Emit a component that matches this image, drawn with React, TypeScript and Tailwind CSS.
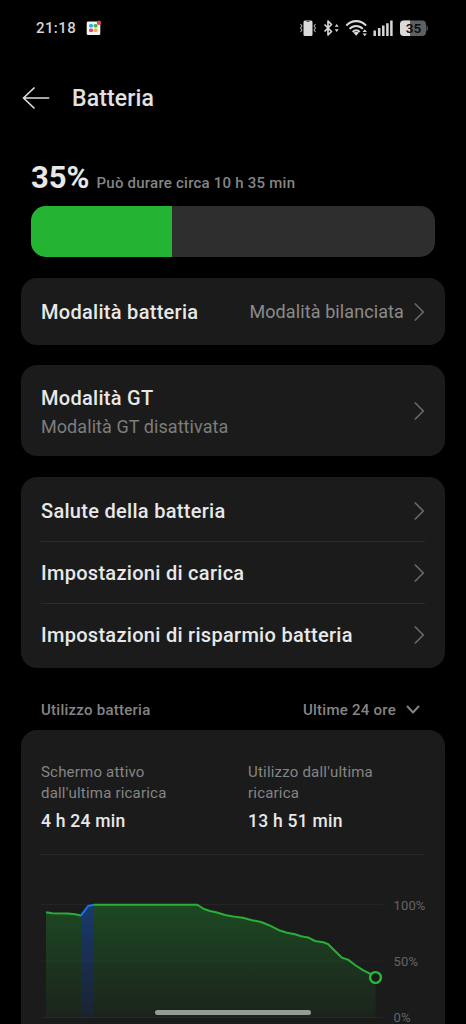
import { ReactNode } from 'react';

interface RowProps
{
	title: string;
	subtitle?: string;
	value?: string;
	className: string;
}

const LEVELS: [number, number][] = [
	[94, 904.7], [197, 904.7], [200, 906.5], [204, 909], [210, 911], [217, 912.5], [225, 915], [233, 916.5], [243, 917.8],
	[252, 920.2], [261, 922], [269, 925.2], [279, 930.2], [287, 932.8], [295, 934.2], [301, 936.2], [308, 937.4],
	[315, 941], [323, 942.2], [328, 944], [335, 951], [342, 957.7], [348, 959.6], [355, 965], [363, 970.2], [375.5, 976.5],
];

const settings = ['Salute della batteria', 'Impostazioni di carica', 'Impostazioni di risparmio batteria'];

function Chevron()
{
	return (
		<svg width="12" height="20" viewBox="0 0 12 20" fill="none" stroke="#6a6a6a" strokeWidth="1.7" strokeLinecap="round" strokeLinejoin="round" className="shrink-0">
			<path d="M2.3 2l8 8-8 8" />
		</svg>
	);
}

function Row({ title, subtitle, value, className }: RowProps)
{
	return (
		<div className={`flex items-center ${className}`}>
			<div className="flex-1 whitespace-nowrap">
				<div className="text-[20px] leading-[28px] font-medium tracking-[0.29px] text-[#e8e8e8]">{title}</div>
				{subtitle && <div className="mt-px text-[18px] leading-[28px] tracking-[0.07px] text-[#7d7d7d]">{subtitle}</div>}
			</div>
			{value && <div className="mr-[9px] text-[18px] leading-[28px] tracking-[0.1px] whitespace-nowrap text-[#8b8b8b]">{value}</div>}
			<Chevron />
		</div>
	);
}

function Card({ children, className }: { children: ReactNode; className: string })
{
	return <section className={`mx-[21px] rounded-2xl bg-[#1b1b1b] px-5 ${className}`}>{children}</section>;
}

function StatusBar()
{
	return (
		<div className="flex h-14 shrink-0 items-center pl-[36px] pr-[37px]">
			<span className="text-[15px] font-medium tracking-[0.4px] text-[#d4d4d4]">21:18</span>
			<svg width="16" height="16" viewBox="0 0 16 16" className="ml-[10px]">
				<rect x="0.7" y="1.5" width="13.6" height="13.6" rx="1.4" fill="#f4f4f0" />
				<rect x="3" y="4" width="4" height="3.6" rx="1.5" fill="#2babe0" />
				<rect x="7.6" y="4" width="4" height="3.6" rx="1.5" fill="#3cb55c" />
				<rect x="3" y="8.4" width="4" height="3.6" rx="1.5" fill="#e43a7f" />
				<rect x="7.6" y="8.4" width="4" height="3.6" rx="1.5" fill="#efb52c" />
				<circle cx="13" cy="2.7" r="2.2" fill="#e2474c" />
			</svg>
			<svg width="130" height="20" viewBox="299 18 130 20" fill="none" className="ml-auto">
				<rect x="303.5" y="20.5" width="9" height="15.5" rx="1.5" fill="#dadada" />
				<path d="M306.5 21.5h3" stroke="#555" strokeWidth="1" />
				<path d="M300.5 24l1.5 2-1.5 2 1.5 2-1.5 2M315.5 24l-1.5 2 1.5 2-1.5 2 1.5 2" stroke="#aaa" strokeWidth="1.1" />
				<path d="M324.5 24.5l7 7-3.500 3.500V21l3.500 3.500-7 7" stroke="#d6d6d6" strokeWidth="1.7" strokeLinejoin="round" />
				<path d="M336.700 24l2 2.800h-4zM336.700 32l2-2.800h-4z" fill="#d6d6d6" />
				<path d="M346.300 25.600c5.500-6 14.300-6 19.800 0M349.600 28.900c3.700-3.900 9.500-3.900 13.200 0M352.700 31.900c2-2 5-2 7 0" stroke="#dadada" strokeWidth="2.100" />
				<path d="M353.500 32.800l2.700 2.900 2.700-2.900q-2.700-2-5.400 0z" fill="#dadada" />
				<path d="M364.700 29.200l2.200 2.900h-4.400zM364.700 36.300l2.200-2.900h-4.400z" fill="#d6d6d6" />
				<path d="M374.700 30.500V36M379.200 28v8M383.300 25.500V36M387.400 23.200V36M391.400 20.500V36" stroke="#d6d6d6" strokeWidth="2.500" />
				<rect x="400" y="20.500" width="26" height="15.500" rx="4" fill="#606060" />
				<path d="M404 20.500h6V36h-6a4 4 0 0 1-4-4v-7.500a4 4 0 0 1 4-4z" fill="#dadada" />
				<path d="M426.500 25q2.600 3.200 0 6.500z" fill="#606060" />
				<text x="413.500" y="33" textAnchor="middle" fontSize="13.500" fontWeight="600" fill="#0c0c0c">35</text>
			</svg>
		</div>
	);
}

function UsageChart()
{
	const line = LEVELS.map(p => p.join(' ')).join(' L');
	const start = '46 912.2 L52 913.3 L68 913.5 L75 914.3 L81 915.6';
	const charge = '81 915.6 L88 906 L94 904.7';

	return (
		<svg width="404" height="169" viewBox="41 855 404 169" fill="none" className="block">
			<defs>
				<linearGradient id="drain" x1="0" y1="904" x2="0" y2="1018" gradientUnits="userSpaceOnUse">
					<stop stopColor="#22b534" stopOpacity="0.3" />
					<stop offset="1" stopColor="#22b534" stopOpacity="0.05" />
				</linearGradient>
				<linearGradient id="charging" x1="0" y1="904" x2="0" y2="1018" gradientUnits="userSpaceOnUse">
					<stop stopColor="#1464e8" stopOpacity="0.42" />
					<stop offset="1" stopColor="#1464e8" stopOpacity="0.1" />
				</linearGradient>
			</defs>
			<path d="M41 904.5h342M41 961h342M41 1017.5h342" stroke="#242424" />
			<path d={`M${start} V1018 H46z`} fill="url(#drain)" />
			<path d={`M${charge} V1018 H81z`} fill="url(#charging)" />
			<path d={`M${line} V1018 H94z`} fill="url(#drain)" />
			<path d={`M${start}`} stroke="#27b038" strokeWidth="2" />
			<path d={`M${line}`} stroke="#27b038" strokeWidth="2" strokeLinejoin="round" />
			<path d={`M${charge}`} stroke="#1974e6" strokeWidth="2" strokeLinejoin="round" />
			<circle cx="375.5" cy="977.5" r="5.4" fill="#1b1b1b" stroke="#27b93b" strokeWidth="2.4" />
			<g fontSize="13" letterSpacing="0.15" fill="#646464">
				<text x="393.5" y="910">100%</text>
				<text x="393.5" y="966">50%</text>
				<text x="393.5" y="1022">0%</text>
			</g>
		</svg>
	);
}

export default function App()
{
	return (
		<main className="relative flex h-[1024px] w-[466px] flex-col overflow-hidden bg-black font-['Roboto',sans-serif]">
			<StatusBar />
			<header className="flex h-[84px] shrink-0 items-center pl-[22px]">
				<svg width="28" height="24" viewBox="0 0 28 24" fill="none" stroke="#dedede" strokeWidth="1.7" strokeLinecap="round" strokeLinejoin="round">
					<path d="M12 2L1.5 12 12 22M1.5 12h25" />
				</svg>
				<h1 className="ml-[22px] pt-0.5 text-[23px] leading-8 font-medium tracking-[0.15px] text-[#e2e2e2]">Batteria</h1>
			</header>

			<div className="mt-[19px] flex h-[38px] shrink-0 items-baseline pl-[31px]">
				<span className="text-[31px] leading-[38px] font-bold text-[#e8e8e8]">35%</span>
				<span className="ml-[7px] text-[15px] font-medium tracking-[0.23px] text-[#858585]">Può durare circa 10 h 35 min</span>
			</div>
			<div className="mx-[31px] mt-[9px] h-[51px] shrink-0 overflow-hidden rounded-[15px] bg-[#2e2e2e]">
				<div className="h-full w-[35%] bg-[#25b334]" />
			</div>

			<Card className="mt-[21px] shrink-0">
				<Row title="Modalità batteria" value="Modalità bilanciata" className="h-[67px]" />
			</Card>
			<Card className="mt-[20px] shrink-0">
				<Row title="Modalità GT" subtitle="Modalità GT disattivata" className="h-[91px] [&>div]:pt-[3px]" />
			</Card>
			<Card className="mt-[21px] shrink-0 py-[3px]">
				{settings.map((title, i) => (
					<div key={title} className={i > 0 ? 'border-t border-[#2c2c2c]' : ''}>
						<Row title={title} className="h-[61px]" />
					</div>
				))}
			</Card>

			<div className="mt-[31px] flex h-[22px] shrink-0 items-center justify-between pl-[41px] pr-[46px] text-[15px] font-medium tracking-[0.25px] text-[#858585]">
				<h2>Utilizzo batteria</h2>
				<button className="flex items-center tracking-[0.25px]">
					Ultime 24 ore
					<svg width="14" height="10" viewBox="0 0 14 10" fill="none" stroke="#858585" strokeWidth="1.9" strokeLinecap="round" strokeLinejoin="round" className="ml-[10px]">
						<path d="M1.5 1.5L7 7.5l5.5-6" />
					</svg>
				</button>
			</div>

			<section className="mx-[21px] mt-[9px] h-[294px] shrink-0 rounded-t-2xl bg-[#1b1b1b] pl-5">
				<div className="mr-5 grid h-[125px] grid-cols-[207px_1fr] border-b border-[#292929] pt-[32px] text-[15px] leading-[21px] tracking-[0.2px] text-[#858585]">
					<div>
						<p>Schermo attivo<br />dall'ultima ricarica</p>
						<p className="mt-[5px] text-[17.5px] leading-6 font-medium tracking-[0.25px] text-[#e8e8e8]">4 h 24 min</p>
					</div>
					<div>
						<p>Utilizzo dall'ultima<br />ricarica</p>
						<p className="mt-[5px] text-[17.5px] leading-6 font-medium tracking-[0.25px] text-[#e8e8e8]">13 h 51 min</p>
					</div>
				</div>
				<UsageChart />
			</section>

			<div className="absolute bottom-[9px] left-[155px] h-[5px] w-[156px] rounded-full bg-[#959b95]" />
		</main>
	);
}
